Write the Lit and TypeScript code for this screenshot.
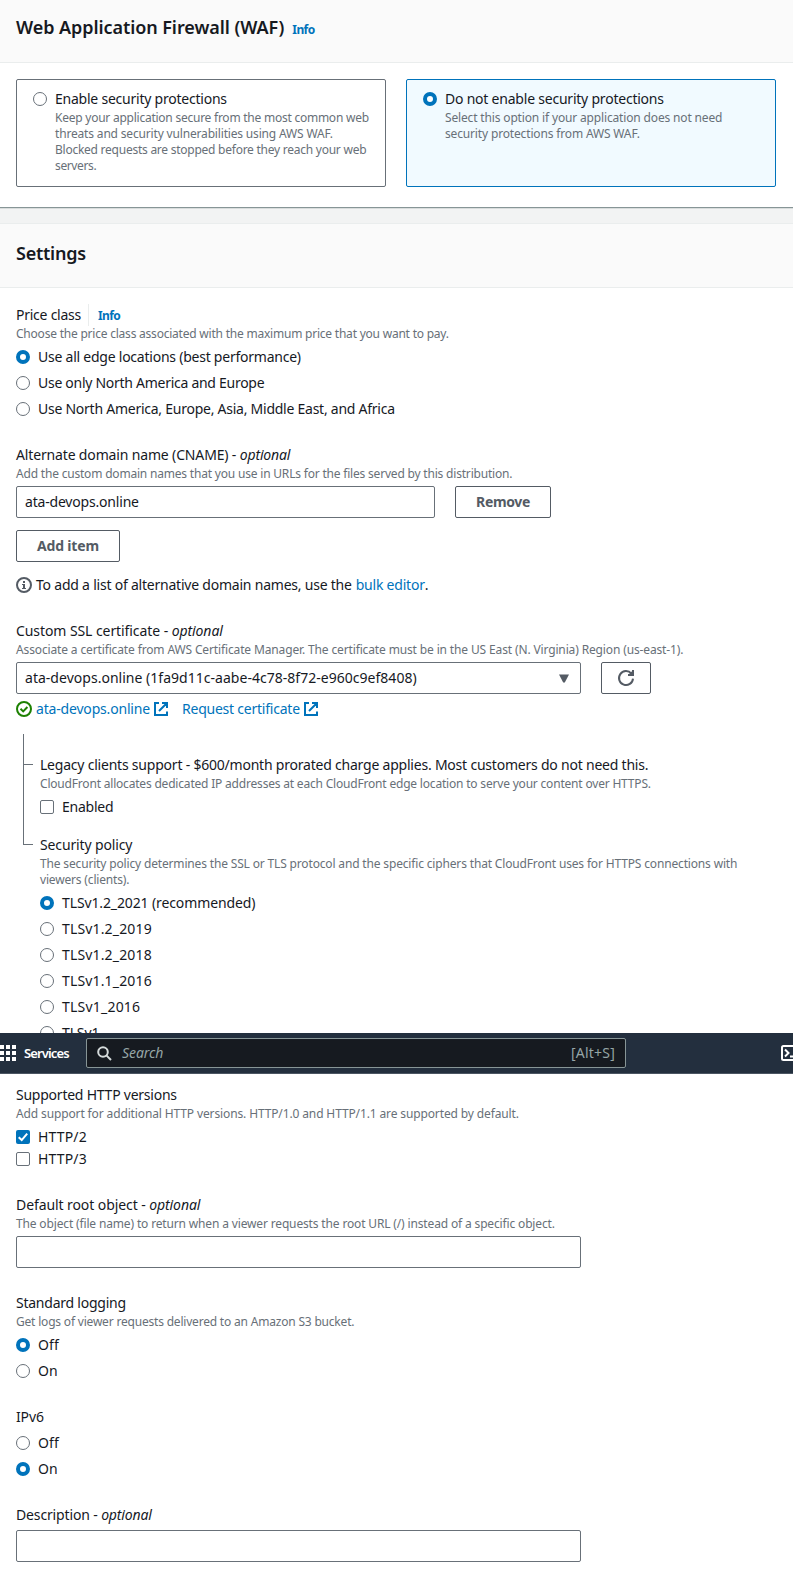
import { LitElement, html, css, svg, nothing } from "lit";
import { customElement, property } from "lit/decorators.js";

/* Inline text whose tracking is adjusted so that it spans a set measure. */
@customElement("fit-text")
class FitText extends LitElement {
  @property({ type: Number }) w = 0;

  static styles = css`
    :host {
      display: inline-block;
      white-space: nowrap;
    }
  `;

  firstUpdated() {
    const n = (this.textContent ?? "").length;
    const natural = this.getBoundingClientRect().width;
    if (n && this.w) this.style.letterSpacing = `${(this.w - 0.7 - natural) / n}px`;
  }

  render() {
    return html`<slot></slot>`;
  }
}

const shared = css`
  * {
    box-sizing: border-box;
  }
  svg {
    display: block;
    flex: none;
  }
`;

@customElement("choice-item")
class ChoiceItem extends LitElement {
  @property() kind: "radio" | "checkbox" = "radio";
  @property({ type: Boolean }) checked = false;
  @property() label = "";
  @property({ type: Number }) w = 0;

  static styles = [
    shared,
    css`
      :host {
        display: block;
      }
      .row {
        display: flex;
        align-items: center;
        gap: 8px;
        height: 22px;
      }
    `,
  ];

  mark() {
    if (this.kind === "radio") {
      return this.checked
        ? svg`<circle cx="7" cy="7" r="5" fill="#fff" stroke="#0073bb" stroke-width="4"/>`
        : svg`<circle cx="7" cy="7" r="6.5" fill="#fff" stroke="#687078"/>`;
    }
    return this.checked
      ? svg`<rect width="14" height="14" rx="2" fill="#0073bb"/><path d="M2.7 7.3 5.7 10.1 11.2 3.6" fill="none" stroke="#fff" stroke-width="2"/>`
      : svg`<rect x=".5" y=".5" width="13" height="13" rx="1.5" fill="#fff" stroke="#687078"/>`;
  }

  render() {
    return html`<div class="row">
      <svg width="14" height="14" viewBox="0 0 14 14">${this.mark()}</svg>
      <fit-text .w=${this.w}>${this.label}</fit-text>
    </div>`;
  }
}

type Choice = [label: string, w: number, checked?: boolean];
type Line = [text: string, w: number];

const priceClasses: Choice[] = [
  ["Use all edge locations (best performance)", 263.5, true],
  ["Use only North America and Europe", 227],
  ["Use North America, Europe, Asia, Middle East, and Africa", 357.5],
];
const policies: Choice[] = [
  ["TLSv1.2_2021 (recommended)", 194, true],
  ["TLSv1.2_2019", 90.5],
  ["TLSv1.2_2018", 90.5],
  ["TLSv1.1_2016", 90.5],
  ["TLSv1_2016", 79],
  ["TLSv1", 38],
];

const external = html`<svg width="14" height="14" viewBox="0 0 14 14" fill="none" stroke="#0073bb" stroke-width="2">
  <path d="M5 1H1v12h12V9.5M8 1h5v5M13 1 5 9" />
</svg>`;

@customElement("app-root")
class AppRoot extends LitElement {
  static styles = [
    shared,
    css`
      :host {
        display: block;
        height: 1578px;
        overflow: hidden;
        background: #fff;
        color: #16191f;
        font: 14px/22px "Noto Sans", "Open Sans", sans-serif;
      }
      .head {
        height: 63px;
        padding: 16px 16px 0;
        background: #fafafa;
        border-bottom: 1px solid #eaeded;
        display: flex;
        align-items: baseline;
        gap: 8px;
      }
      .head.second {
        height: 65px;
        padding-top: 18px;
        border-top: 1px solid #eaeded;
      }
      h2 {
        margin: 0;
        font-size: 18px;
        line-height: 22px;
        font-weight: 600;
      }
      .info {
        font-size: 12px;
        font-weight: 700;
        color: #0073bb;
      }
      .cards {
        display: grid;
        grid-template-columns: 370px 370px;
        gap: 20px;
        padding: 16px 16px 20px;
        border-bottom: 1px solid #879596;
        height: 145px;
      }
      .card {
        border: 1px solid #687078;
        border-radius: 2px;
        padding: 8px 16px;
        height: 108px;
      }
      .card.on {
        border-color: #0073bb;
        background: #f1faff;
      }
      .card .desc {
        padding-left: 22px;
      }
      .gap {
        height: 15px;
        background: #f2f3f3;
        border-top: 1px solid #d9dddd;
      }
      .form {
        padding: 16px 16px 0;
        display: flex;
        flex-direction: column;
        gap: 24px;
      }
      .form.upper {
        height: 745px;
        overflow: hidden;
      }
      .form.lower {
        padding-top: 10px;
      }
      .label {
        height: 22px;
        display: flex;
      }
      .sep {
        border-left: 1px solid #eaeded;
        margin-left: 7px;
        padding-left: 9px;
      }
      .desc {
        font-size: 12px;
        line-height: 16px;
        color: #687078;
      }
      .desc .line {
        display: block;
        height: 16px;
      }
      .control {
        margin-top: 4px;
      }
      .choices {
        display: flex;
        flex-direction: column;
        gap: 4px;
      }
      .row {
        display: flex;
        gap: 20px;
      }
      .box {
        height: 32px;
        width: 565px;
        border: 1px solid #687078;
        border-radius: 2px;
        padding: 4px 11px 4px 8px;
        display: flex;
        align-items: center;
        justify-content: space-between;
      }
      .box.short {
        width: 419px;
      }
      .btn {
        height: 32px;
        border: 1px solid #545b64;
        border-radius: 2px;
        color: #545b64;
        font-weight: 700;
        display: flex;
        align-items: center;
        justify-content: center;
        width: 96px;
      }
      .btn.add {
        width: 104px;
        margin-top: 12px;
      }
      .btn.icon {
        width: 50px;
      }
      .hint {
        display: flex;
        align-items: center;
        margin-top: 12px;
        height: 22px;
      }
      .hint svg {
        margin-right: 4px;
      }
      .link {
        color: #0073bb;
      }
      .space {
        margin-left: 4px;
      }
      .links {
        display: flex;
        align-items: center;
        height: 22px;
        margin-top: 4px;
        gap: 4px;
      }
      .links .request {
        margin-left: 10px;
      }
      .nested {
        display: grid;
        grid-template-columns: 24px 1fr;
        margin-top: -10px;
      }
      .tree {
        padding-left: 7px;
      }
      .twig {
        border-left: 1px solid #687078;
        border-bottom: 1px solid #687078;
        width: 10px;
        height: 31px;
      }
      .twig.last {
        height: 80px;
      }
      .branches {
        padding-top: 20px;
        display: flex;
        flex-direction: column;
        gap: 16px;
      }
      nav {
        height: 41px;
        background: #232f3e;
        border-bottom: 1px solid #4b5562;
        display: flex;
        align-items: center;
        color: #fff;
      }
      .services {
        margin-left: 8px;
        font-size: 13px;
        font-weight: 600;
        width: 62px;
      }
      .search {
        width: 540px;
        height: 30px;
        background: #161a20;
        border: 1px solid #879596;
        border-radius: 2px;
        display: flex;
        align-items: center;
        padding: 0 10px 0 10px;
        color: #95a5a6;
      }
      .search em {
        margin-left: 10px;
        flex: 1;
      }
      .shell {
        margin-left: 155px;
        width: 12px;
        overflow: hidden;
      }
    `,
  ];

  desc(lines: Line[]) {
    return html`<div class="desc">
      ${lines.map(([t, w]) => html`<span class="line"><fit-text .w=${w}>${t}</fit-text></span>`)}
    </div>`;
  }

  label(text: string, w: number, optional = false) {
    return html`<div class="label">
      <fit-text .w=${w}>${text}${optional ? html` - <em>optional</em>` : nothing}</fit-text>
    </div>`;
  }

  radios(items: Choice[]) {
    return html`<div class="choices control">
      ${items.map(([l, w, c]) => html`<choice-item .label=${l} .w=${w} .checked=${!!c}></choice-item>`)}
    </div>`;
  }

  render() {
    return html`
      <header class="head">
        <h2><fit-text .w=${269}>Web Application Firewall (WAF)</fit-text></h2>
        <fit-text class="info" .w=${23}>Info</fit-text>
      </header>
      <section class="cards">
        <div class="card">
          <choice-item label="Enable security protections" .w=${172.5}></choice-item>
          ${this.desc([
            ["Keep your application secure from the most common web", 314.5],
            ["threats and security vulnerabilities using AWS WAF.", 278.5],
            ["Blocked requests are stopped before they reach your web", 312],
            ["servers.", 42],
          ])}
        </div>
        <div class="card on">
          <choice-item label="Do not enable security protections" .w=${219.5} checked></choice-item>
          ${this.desc([
            ["Select this option if your application does not need", 278],
            ["security protections from AWS WAF.", 195.5],
          ])}
        </div>
      </section>
      <div class="gap"></div>
      <header class="head second">
        <h2><fit-text .w=${70.5}>Settings</fit-text></h2>
      </header>

      <main class="form upper">
        <section>
          <div class="label">
            <fit-text .w=${65.7}>Price class</fit-text>
            <span class="sep"><fit-text class="info" .w=${23}>Info</fit-text></span>
          </div>
          ${this.desc([["Choose the price class associated with the maximum price that you want to pay.", 433.5]])}
          ${this.radios(priceClasses)}
        </section>

        <section>
          ${this.label("Alternate domain name (CNAME)", 275, true)}
          ${this.desc([["Add the custom domain names that you use in URLs for the files served by this distribution.", 497]])}
          <div class="row control">
            <div class="box short"><fit-text .w=${114.5}>ata-devops.online</fit-text></div>
            <div class="btn"><fit-text .w=${54.5}>Remove</fit-text></div>
          </div>
          <div class="btn add"><fit-text .w=${62.5}>Add item</fit-text></div>
          <div class="hint">
            <svg width="16" height="16" viewBox="0 0 16 16" fill="none" stroke="#545b64">
              <circle cx="8" cy="8" r="7" stroke-width="2" />
              <path d="M7 4h2v2H7zM6 7h3v4h1v1H6v-1h1V8H6z" fill="#545b64" stroke="none" />
            </svg>
            <fit-text .w=${316.4}>To add a list of alternative domain names, use the</fit-text>
            <fit-text class="link space" .w=${69.7}>bulk editor</fit-text>.
          </div>
        </section>

        <section>
          ${this.label("Custom SSL certificate", 207.5, true)}
          ${this.desc([["Associate a certificate from AWS Certificate Manager. The certificate must be in the US East (N. Virginia) Region (us-east-1).", 668]])}
          <div class="row control">
            <div class="box">
              <fit-text .w=${392.4}>ata-devops.online (1fa9d11c-aabe-4c78-8f72-e960c9ef8408)</fit-text>
              <svg width="10" height="9" viewBox="0 0 10 9"><path d="M0 .5h10L5.8 8.5H4.2z" fill="#545b64" /></svg>
            </div>
            <div class="btn icon">
              <svg width="18" height="18" viewBox="0 0 18 18" fill="none" stroke="#545b64" stroke-width="2">
                <path d="M16 9.6A7 7 0 1 1 14.4 4.6" />
                <path d="M16 1v5h-5" />
                <path d="M13.2 3.4 16.5 1.5v5h-5z" fill="#545b64" stroke="none" />
              </svg>
            </div>
          </div>
          <div class="links link">
            <svg width="16" height="16" viewBox="0 0 16 16" fill="none" stroke="#1d8102" stroke-width="2">
              <circle cx="8" cy="8" r="7" />
              <path d="M4.5 7.8 7.2 10.4 11.4 6" />
            </svg>
            <fit-text .w=${114.7}>ata-devops.online</fit-text>${external}
            <fit-text class="request" .w=${118.5}>Request certificate</fit-text>${external}
          </div>
        </section>

        <section class="nested">
          <div class="tree">
            <div class="twig"></div>
            <div class="twig last"></div>
          </div>
          <div class="branches">
            <div>
              ${this.label("Legacy clients support - $600/month prorated charge applies. Most customers do not need this.", 609)}
              ${this.desc([["CloudFront allocates dedicated IP addresses at each CloudFront edge location to serve your content over HTTPS.", 611.5]])}
              <choice-item class="control" kind="checkbox" label="Enabled" .w=${52}></choice-item>
            </div>
            <div>
              ${this.label("Security policy", 93)}
              ${this.desc([
                ["The security policy determines the SSL or TLS protocol and the specific ciphers that CloudFront uses for HTTPS connections with", 698],
                ["viewers (clients).", 90],
              ])}
              ${this.radios(policies)}
            </div>
          </div>
        </section>
      </main>

      <nav>
        <svg width="16" height="16" viewBox="0 0 16 16" fill="#fff">
          <path d="M0 0h4v4H0zM6 0h4v4H6zM12 0h4v4h-4zM0 6h4v4H0zM6 6h4v4H6zM12 6h4v4h-4zM0 12h4v4H0zM6 12h4v4H6zM12 12h4v4h-4z" />
        </svg>
        <span class="services"><fit-text .w=${45.5}>Services</fit-text></span>
        <div class="search">
          <svg width="15" height="15" viewBox="0 0 15 15" fill="none" stroke="#d5dbdb" stroke-width="2">
            <circle cx="6" cy="6" r="4.8" />
            <path d="m9.4 9.4 4.6 4.6" />
          </svg>
          <em><fit-text .w=${42}>Search</fit-text></em>
          <fit-text .w=${44.7}>[Alt+S]</fit-text>
        </div>
        <span class="shell">
          <svg width="18" height="16" viewBox="0 0 18 16" fill="none" stroke="#fff" stroke-width="2">
            <rect x="1" y="1" width="16" height="14" rx="1.5" />
            <path d="m4 4.5 3.5 3.5L4 11.5M9 11.5h4.5" />
          </svg>
        </span>
      </nav>

      <div class="form lower">
        <section>
          ${this.label("Supported HTTP versions", 161.5)}
          ${this.desc([["Add support for additional HTTP versions. HTTP/1.0 and HTTP/1.1 are supported by default.", 503.5]])}
          <choice-item class="control" kind="checkbox" label="HTTP/2" .w=${49.5} checked></choice-item>
          <choice-item kind="checkbox" label="HTTP/3" .w=${49.5}></choice-item>
        </section>
        <section>
          ${this.label("Default root object", 185, true)}
          ${this.desc([["The object (file name) to return when a viewer requests the root URL (/) instead of a specific object.", 539.5]])}
          <div class="box control"></div>
        </section>
        <section>
          ${this.label("Standard logging", 110.5)}
          ${this.desc([["Get logs of viewer requests delivered to an Amazon S3 bucket.", 339]])}
          ${this.radios([["Off", 21.7, true], ["On", 20.5]])}
        </section>
        <section>
          ${this.label("IPv6", 28.5)}
          ${this.radios([["Off", 21.7], ["On", 20.5, true]])}
        </section>
        <section>
          ${this.label("Description", 136.5, true)}
          <div class="box control"></div>
        </section>
      </div>
    `;
  }
}
